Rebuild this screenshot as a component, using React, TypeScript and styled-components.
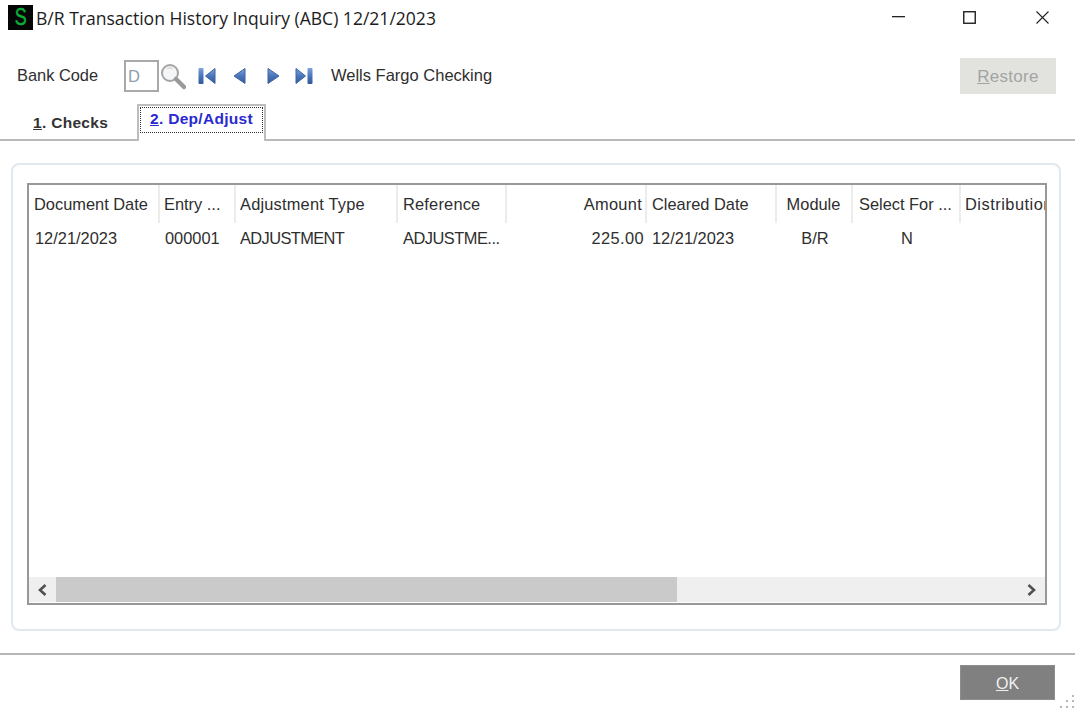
import React from "react";
import styled, { createGlobalStyle } from "styled-components";

const Global = createGlobalStyle`
  html, body { margin: 0; padding: 0; background: #fff; }
  * { box-sizing: border-box; }
`;

const Win = styled.div`
  position: relative;
  width: 1075px;
  height: 709px;
  overflow: hidden;
  display: flex;
  flex-direction: column;
  background: #fff;
  font-family: "Liberation Sans", Arial, sans-serif;
  color: #2e2e2e;
`;

const TitleBar = styled.div`
  height: 36px;
  display: flex;
  align-items: center;
  padding: 0 0 0 8px;
  flex: none;
`;
const Logo = styled.div`
  width: 25px;
  height: 25px;
  margin-top: -1px;
  background: #050505;
  color: #0fae3a;
  font: 23px/25px "Liberation Sans", Arial, sans-serif;
  -webkit-text-stroke: 0.5px #0fae3a;
  text-align: center;
`;
const LogoGlyph = styled.span`
  display: inline-block;
  transform: scaleX(0.78);
`;
const Title = styled.div`
  margin-left: 3px;
  font-family: "Open Sans", sans-serif;
  font-size: 17.55px;
  color: #1c1c1c;
  white-space: nowrap;
`;
const Controls = styled.div`
  margin-left: auto;
  display: flex;
  align-items: center;
  padding-right: 26px;
  margin-top: -2px;
`;
const ControlIcon = styled.svg<{ $ml?: number }>`
  flex: none;
  margin-left: ${(p) => p.$ml ?? 0}px;
`;

const Toolbar = styled.div`
  margin-top: 22px;
  height: 36px;
  flex: none;
  display: flex;
  align-items: center;
  padding: 0 19px 0 17px;
`;
const Label = styled.span`
  font-size: 16.4px;
  width: 107px;
  margin-top: -1px;
  white-space: nowrap;
`;
const CodeBox = styled.div`
  width: 35px;
  height: 32px;
  border: 2px solid #a9a9a9;
  color: #8f9db0;
  font-size: 16.5px;
  line-height: 28px;
  padding-left: 2px;
`;
const IconSlot = styled.svg<{ $ml: number }>`
  flex: none;
  margin-left: ${(p) => p.$ml}px;
`;
const BankName = styled.span`
  margin-left: 18px;
  margin-top: -1px;
  font-size: 16.5px;
  white-space: nowrap;
`;
const RestoreBtn = styled.div`
  margin-left: auto;
  width: 96px;
  height: 36px;
  background: #e2e3df;
  color: #a3a3a3;
  font-size: 17px;
  letter-spacing: 0.3px;
  line-height: 37px;
  text-align: center;
`;

const TabRow = styled.div`
  height: 47px;
  flex: none;
  display: flex;
  align-items: flex-end;
  border-bottom: 2px solid #b9b9b9;
  padding-left: 33px;
`;
const Tab = styled.div`
  width: 104px;
  height: 20px;
  margin-bottom: 5px;
  font-size: 15.5px;
  line-height: 18px;
  font-weight: bold;
  letter-spacing: 0.3px;
  color: #333;
  white-space: nowrap;
`;
const ActiveTab = styled.div`
  width: 129px;
  height: 37px;
  margin-bottom: -2px;
  background: #fff;
  border: 2px solid #bdbdbd;
  border-bottom: none;
  padding: 1px;
`;
const FocusRing = styled.div`
  height: 26px;
  border: 1.5px dotted #333;
  font-size: 15.5px;
  font-weight: bold;
  letter-spacing: 0.3px;
  color: #2a2ad0;
  padding-left: 9px;
  line-height: 22px;
  white-space: nowrap;
`;
const Ul = styled.span`
  text-decoration: underline;
`;

const Main = styled.div`
  flex: none;
  height: 514px;
  padding: 22px 14px 0 11px;
  border-bottom: 2px solid #b6b6b6;
`;
const Panel = styled.div`
  height: 468px;
  border: 2px solid #e1e9f0;
  border-radius: 8px;
  padding: 18px 12px 24px 14px;
`;
const GridBox = styled.div`
  height: 100%;
  border: 2px solid #989898;
  display: flex;
  flex-direction: column;
  overflow: hidden;
`;
const Cols = "131px 76px 162px 109px 140px 130px 76px 108px 84px";
const HeadRow = styled.div`
  display: grid;
  grid-template-columns: ${Cols};
  height: 38px;
  flex: none;
`;
const HeadCell = styled.div<{ $align?: string; $pr?: number; $pl?: number; $ls?: number }>`
  font-size: 16.4px;
  letter-spacing: ${(p) => p.$ls ?? 0}px;
  line-height: 38px;
  padding: 0 ${(p) => p.$pr ?? 0}px 0 ${(p) => p.$pl ?? 0}px;
  text-align: ${(p) => p.$align ?? "left"};
  border-right: 2px solid #ececec;
  white-space: nowrap;
  overflow: hidden;
  &:last-child { border-right: none; }
`;
const DataRow = styled.div`
  display: grid;
  grid-template-columns: ${Cols};
  height: 31px;
  flex: none;
`;
const DataCell = styled.div<{ $align?: string; $pr?: number; $pl?: number; $ls?: number }>`
  font-size: 16.4px;
  letter-spacing: ${(p) => p.$ls ?? 0}px;
  line-height: 30px;
  padding: 0 ${(p) => p.$pr ?? 0}px 0 ${(p) => p.$pl ?? 5}px;
  text-align: ${(p) => p.$align ?? "left"};
  white-space: nowrap;
  overflow: hidden;
`;
const Spacer = styled.div`
  flex: 1;
`;
const ScrollBar = styled.div`
  height: 25px;
  flex: none;
  margin: 0 0 1px;
  background: #efefef;
  display: flex;
  align-items: center;
`;
const ScrollBtn = styled.div`
  width: 27px;
  height: 100%;
  flex: none;
  display: flex;
  align-items: center;
  justify-content: center;
`;
const Thumb = styled.div`
  width: 621px;
  height: 100%;
  flex: none;
  background: #cacaca;
`;
const Track = styled.div`
  flex: 1;
`;

const Footer = styled.div`
  flex: 1;
  display: flex;
  justify-content: flex-end;
  padding: 10px 20px 0 0;
`;
const OkBtn = styled.div`
  width: 95px;
  height: 35px;
  background: #808080;
  border: 1px solid #8d8d8d;
  color: #f0f0f0;
  font-size: 16px;
  line-height: 35px;
  text-align: center;
`;
const Grip = styled.svg`
  position: absolute;
  right: 0;
  bottom: 0;
`;

const NavDefs = () => (
  <svg width="0" height="0" style={{ position: "absolute" }}>
    <defs>
      <linearGradient id="nav" x1="0" y1="0" x2="0" y2="1">
        <stop offset="0" stopColor="#7ea3dc" />
        <stop offset="0.5" stopColor="#4a76bd" />
        <stop offset="1" stopColor="#33589c" />
      </linearGradient>
    </defs>
  </svg>
);

const Nav = ({ kind, ml }: { kind: "first" | "prev" | "next" | "last"; ml: number }) => {
  const wide = kind === "first" || kind === "last";
  const w = wide ? 18 : 13;
  const shapes: Record<string, React.ReactNode> = {
    first: (
      <>
        <rect x="0.5" y="1" width="5" height="16" rx="1" fill="url(#nav)" />
        <path d="M17 1.5 L7.5 9 L17 16.5 Z" fill="url(#nav)" stroke="#3d639f" strokeLinejoin="round" />
      </>
    ),
    prev: <path d="M12 1.5 L1 9 L12 16.5 Z" fill="url(#nav)" stroke="#3d639f" strokeLinejoin="round" />,
    next: <path d="M1 1.5 L12 9 L1 16.5 Z" fill="url(#nav)" stroke="#3d639f" strokeLinejoin="round" />,
    last: (
      <>
        <path d="M1 1.5 L10.5 9 L1 16.5 Z" fill="url(#nav)" stroke="#3d639f" strokeLinejoin="round" />
        <rect x="12.5" y="1" width="5" height="16" rx="1" fill="url(#nav)" />
      </>
    ),
  };
  return (
    <IconSlot $ml={ml} width={w} height="18" viewBox={`0 0 ${w} 18`}>
      {shapes[kind]}
    </IconSlot>
  );
};

const heads: { t: string; a?: string; pr?: number; pl?: number; ls?: number }[] = [
  { t: "Document Date", pl: 5 },
  { t: "Entry ...", pl: 4 },
  { t: "Adjustment Type", pl: 4, ls: 0.2 },
  { t: "Reference", pl: 5, ls: 0.2 },
  { t: "Amount", a: "right", pr: 3, ls: 0.3 },
  { t: "Cleared Date", pl: 5 },
  { t: "Module", a: "center", pr: 1 },
  { t: "Select For ...", pl: 6 },
  { t: "Distribution", pl: 4, ls: 0.5 },
];

export default function App() {
  return (
    <Win>
      <Global />
      <NavDefs />
      <TitleBar>
        <Logo><LogoGlyph>S</LogoGlyph></Logo>
        <Title>B/R Transaction History Inquiry (ABC) 12/21/2023</Title>
        <Controls>
          <ControlIcon width="13" height="2" viewBox="0 0 13 2"><rect width="13" height="1.3" fill="#222" /></ControlIcon>
          <ControlIcon $ml={58} width="13" height="13" viewBox="0 0 13 13"><rect x="0.75" y="0.75" width="11.5" height="11.5" fill="none" stroke="#222" strokeWidth="1.4" /></ControlIcon>
          <ControlIcon $ml={60} width="13" height="13" viewBox="0 0 13 13"><path d="M0.5 0.5 L12.5 12.5 M12.5 0.5 L0.5 12.5" stroke="#222" strokeWidth="1.1" fill="none" /></ControlIcon>
        </Controls>
      </TitleBar>
      <Toolbar>
        <Label>Bank Code</Label>
        <CodeBox>D</CodeBox>
        <IconSlot $ml={1} width="26" height="27" viewBox="0 0 26 27">
          <circle cx="10" cy="10" r="8" fill="#f4f6f7" stroke="#a4a4a4" strokeWidth="2" />
          <path d="M7 6 a5 5 0 0 1 6 0" stroke="#dcdcdc" strokeWidth="1.5" fill="none" />
          <path d="M16 16 L24 24" stroke="#9a9a9a" strokeWidth="4.5" strokeLinecap="round" />
        </IconSlot>
        <Nav kind="first" ml={12} />
        <Nav kind="prev" ml={17} />
        <Nav kind="next" ml={21} />
        <Nav kind="last" ml={15} />
        <BankName>Wells Fargo Checking</BankName>
        <RestoreBtn><Ul>R</Ul>estore</RestoreBtn>
      </Toolbar>
      <TabRow>
        <Tab><Ul>1</Ul>. Checks</Tab>
        <ActiveTab>
          <FocusRing><Ul>2</Ul>. Dep/Adjust</FocusRing>
        </ActiveTab>
      </TabRow>
      <Main>
        <Panel>
          <GridBox>
            <HeadRow>
              {heads.map((h) => (
                <HeadCell key={h.t} $align={h.a} $pr={h.pr} $pl={h.pl} $ls={h.ls}>{h.t}</HeadCell>
              ))}
            </HeadRow>
            <DataRow>
              <DataCell $pl={6}>12/21/2023</DataCell>
              <DataCell>000001</DataCell>
              <DataCell $pl={4} $ls={-0.6}>ADJUSTMENT</DataCell>
              <DataCell $ls={-0.5}>ADJUSTME...</DataCell>
              <DataCell $align="right" $pr={3} $ls={0.4}>225.00</DataCell>
              <DataCell>12/21/2023</DataCell>
              <DataCell $align="center" $pl={0}>B/R</DataCell>
              <DataCell $align="center" $pl={0}>N</DataCell>
              <DataCell />
            </DataRow>
            <Spacer />
            <ScrollBar>
              <ScrollBtn>
                <svg width="11" height="12" viewBox="0 0 11 12"><path d="M8.5 1 L3 6 L8.5 11" fill="none" stroke="#505050" strokeWidth="2.6" /></svg>
              </ScrollBtn>
              <Thumb />
              <Track />
              <ScrollBtn>
                <svg width="11" height="12" viewBox="0 0 11 12"><path d="M2.5 1 L8 6 L2.5 11" fill="none" stroke="#505050" strokeWidth="2.6" /></svg>
              </ScrollBtn>
            </ScrollBar>
          </GridBox>
        </Panel>
      </Main>
      <Footer>
        <OkBtn><Ul>O</Ul>K</OkBtn>
      </Footer>
      <Grip width="16" height="15" viewBox="0 0 16 15">
        <g fill="#b4b8bc">
          <rect x="13" y="1" width="2" height="2" />
          <rect x="7" y="6" width="2" height="2" />
          <rect x="13" y="6" width="2" height="2" />
          <rect x="1" y="12" width="2" height="2" />
          <rect x="7" y="12" width="2" height="2" />
          <rect x="13" y="12" width="2" height="2" />
        </g>
      </Grip>
    </Win>
  );
}
